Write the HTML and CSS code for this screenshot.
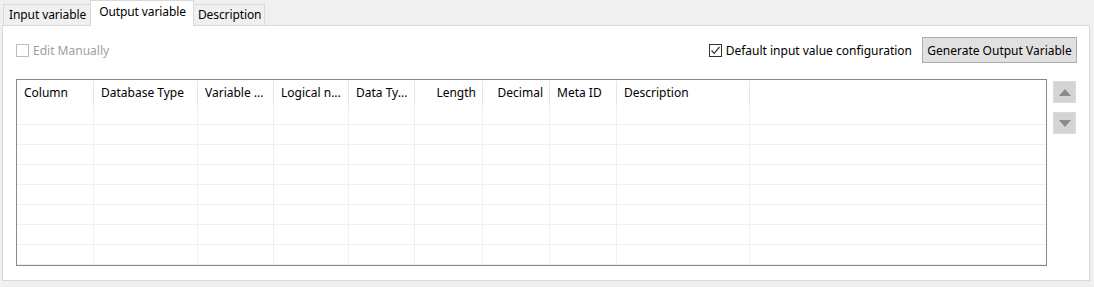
FILE: index.html
```html
<!DOCTYPE html>
<html>
<head>
<meta charset="utf-8">
<link rel="stylesheet" href="styles.css">
</head>
<body>
<div class="tabs">
  <div class="tab first">Input variable</div>
  <div class="tab active">Output variable</div>
  <div class="tab last">Description</div>
</div>
<div class="panel">
  <div class="toolbar">
    <label class="check disabled"><span class="box"></span>Edit Manually</label>
    <div class="spacer"></div>
    <label class="check"><span class="box checked"><svg width="11" height="11" viewBox="0 0 11 11"><path d="M1.5 5.5 L4.2 8.3 L9.5 2" fill="none" stroke="#333" stroke-width="1.2"/></svg></span>Default input value configuration</label>
    <button class="btn">Generate Output Variable</button>
  </div>
  <div class="main">
    <div class="grid">
      <div class="row head">
        <div class="c">Column</div>
        <div class="c">Database Type</div>
        <div class="c">Variable ...</div>
        <div class="c">Logical n...</div>
        <div class="c">Data Ty...</div>
        <div class="c r">Length</div>
        <div class="c r">Decimal</div>
        <div class="c">Meta ID</div>
        <div class="c">Description</div>
        <div class="c f"></div>
      </div>
      <div class="row"><div class="c"></div><div class="c"></div><div class="c"></div><div class="c"></div><div class="c"></div><div class="c"></div><div class="c"></div><div class="c"></div><div class="c"></div><div class="c f"></div></div>
      <div class="row"><div class="c"></div><div class="c"></div><div class="c"></div><div class="c"></div><div class="c"></div><div class="c"></div><div class="c"></div><div class="c"></div><div class="c"></div><div class="c f"></div></div>
      <div class="row"><div class="c"></div><div class="c"></div><div class="c"></div><div class="c"></div><div class="c"></div><div class="c"></div><div class="c"></div><div class="c"></div><div class="c"></div><div class="c f"></div></div>
      <div class="row"><div class="c"></div><div class="c"></div><div class="c"></div><div class="c"></div><div class="c"></div><div class="c"></div><div class="c"></div><div class="c"></div><div class="c"></div><div class="c f"></div></div>
      <div class="row"><div class="c"></div><div class="c"></div><div class="c"></div><div class="c"></div><div class="c"></div><div class="c"></div><div class="c"></div><div class="c"></div><div class="c"></div><div class="c f"></div></div>
      <div class="row"><div class="c"></div><div class="c"></div><div class="c"></div><div class="c"></div><div class="c"></div><div class="c"></div><div class="c"></div><div class="c"></div><div class="c"></div><div class="c f"></div></div>
      <div class="row"><div class="c"></div><div class="c"></div><div class="c"></div><div class="c"></div><div class="c"></div><div class="c"></div><div class="c"></div><div class="c"></div><div class="c"></div><div class="c f"></div></div>
      <div class="row last"><div class="c"></div><div class="c"></div><div class="c"></div><div class="c"></div><div class="c"></div><div class="c"></div><div class="c"></div><div class="c"></div><div class="c"></div><div class="c f"></div></div>
    </div>
    <div class="side">
      <div class="sbtn"><span class="tri up"></span></div>
      <div class="sbtn"><span class="tri down"></span></div>
    </div>
  </div>
</div>
</body>
</html>
```
FILE: styles.css
```css
* { box-sizing: border-box; }
html, body { margin: 0; padding: 0; }
body {
  width: 1094px;
  height: 287px;
  background: #f0f0f0;
  font-family: "Noto Sans", "Open Sans", sans-serif;
  font-size: 12px;
  color: #000;
  overflow: hidden;
}
.tabs {
  display: flex;
  align-items: flex-end;
  height: 25px;
  padding-left: 3px;
  position: relative;
  z-index: 2;
}
.tab {
  height: 21px;
  line-height: 20px;
  border: 1px solid #d9d9d9;
  border-bottom: none;
  background: #f0f0f0;
  margin-right: -1px;
  letter-spacing: -0.1px;
}
.tab.first { padding: 0 4px 0 5px; }
.tab.last { padding: 0 3px 0 4px; }
.tab.active {
  height: 26px;
  background: #fff;
  margin-bottom: -1px;
  padding: 0 7px 4px 8px;
  line-height: 22px;
  position: relative;
  z-index: 3;
}
.panel {
  margin: 0 4px 0 2px;
  height: 256px;
  border: 1px solid #d9d9d9;
  background: #fff;
  padding: 11px 12px 0 13px;
}
.toolbar {
  display: flex;
  align-items: center;
  height: 26px;
}
.spacer { flex: 1; }
.check {
  display: flex;
  align-items: center;
  gap: 4px;
}
.check.disabled { color: #a0a0a0; }
.box {
  width: 13px;
  height: 13px;
  border: 1px solid #333;
  background: #fff;
  display: flex;
  align-items: center;
  justify-content: center;
}
.disabled .box { border-color: #bcbcbc; }
.btn {
  margin-left: 10px;
  height: 26px;
  width: 155px;
  padding: 0;
  border: 1px solid #adadad;
  background: #e1e1e1;
  font: inherit;
  color: #000;
}
.main {
  display: flex;
  margin-top: 16px;
  gap: 6px;
}
.grid {
  width: 1031px;
  height: 187px;
  border: 1px solid #828790;
  overflow: hidden;
  background: #fff;
}
.row {
  display: grid;
  grid-template-columns: 77px 104px 76px 75px 66px 68px 67px 67px 133px 1fr;
  height: 20px;
  border-bottom: 1px solid #efefef;
}
.row .c { border-right: 1px solid #eaf0f8; }
.row .c.f { border-right: none; }
.row.head {
  height: 25px;
  border-bottom: none;
  padding-top: 1px;
}
.row.head .c {
  border-right: 1px solid #e5e5e5;
  padding: 4px 6px 0 7px;
  line-height: 16px;
  white-space: nowrap;
  overflow: hidden;
}
.row.head .c.f { border-right: none; }
.row.head .c.r { text-align: right; }
.side {
  display: flex;
  flex-direction: column;
  gap: 9px;
  padding-top: 2px;
}
.sbtn {
  width: 23px;
  height: 22px;
  background: #d4d4d4;
  border: 1px solid #dcdcdc;
  display: flex;
  align-items: center;
  justify-content: center;
}
.tri { width: 0; height: 0; border-left: 6px solid transparent; border-right: 6px solid transparent; }
.tri.up { border-bottom: 7px solid #8a8a8a; }
.tri.down { border-top: 7px solid #8a8a8a; }
```
